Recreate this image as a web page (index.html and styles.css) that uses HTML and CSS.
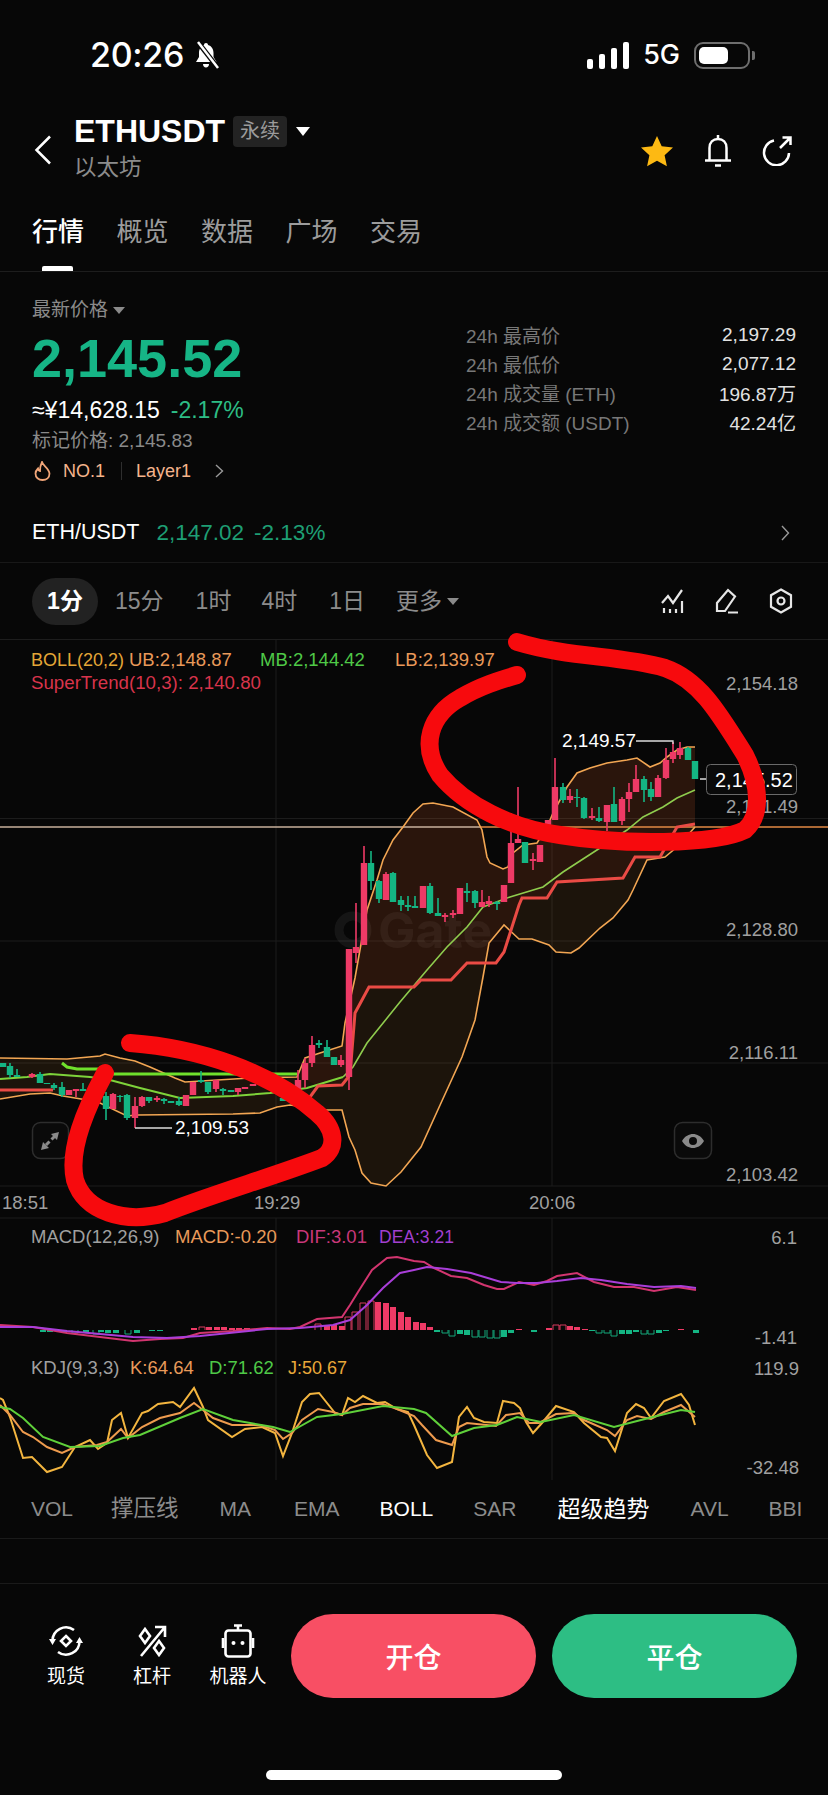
FILE: index.html
```html
<!DOCTYPE html>
<html lang="zh">
<head>
<meta charset="utf-8">
<title>ETHUSDT</title>
<link rel="stylesheet" href="styles.css">
</head>
<body>
<div class="app">
  <div class="status">
    <div class="status-left">
      <span class="time">20:26</span>
      <svg class="muted" viewBox="0 0 27 28"><path class="solid" d="M13 2c1.200 0 2 .8 2 2 3.600 1 5.500 4 5.500 8v4l3 5H3l3-5v-4c0-4 2-7 5-8 0-1.200.8-2 2-2zM10 23h6c0 2-1.300 3.500-3 3.500S10 25 10 23z"/><path class="slash-bg" d="M4 0l21 27"/><path class="slash" d="M5 1l20 26"/></svg>
    </div>
    <div class="status-right">
      <div class="signal"><i class="b1"></i><i class="b2"></i><i class="b3"></i><i class="b4"></i></div>
      <span class="net">5G</span>
      <div class="battery"><div class="battery-level"></div></div>
      <div class="battery-nub"></div>
    </div>
  </div>

  <header class="head">
    <svg class="back" viewBox="0 0 18 30"><path class="line2" d="M16 1.500L2.500 15 16 28.500"/></svg>
    <div class="title-block">
      <div class="title-row">
        <span class="symbol">ETHUSDT</span>
        <span class="badge">永续</span>
        <span class="tri-white"></span>
      </div>
      <div class="subtitle">以太坊</div>
    </div>
    <div class="head-actions">
      <svg class="ic-star" viewBox="0 0 34 32"><path class="star" d="M17 1l4.700 10.300 11.300 1.300-8.400 7.600 2.300 11.100L17 25.700 7.100 31.300l2.300-11.100L1 12.600l11.300-1.300z"/></svg>
      <svg class="ic-bell" viewBox="0 0 28 33"><path class="line2" d="M14 1v4M5.500 26V14c0-5.500 3.500-9 8.500-9s8.500 3.500 8.500 9v12M1 26.500h26M11 31.500h6"/></svg>
      <svg class="ic-share" viewBox="0 0 30 30"><path class="line2" d="M12 4.500A12.500 12.500 0 1 0 27 17M18 12L28 2M20.500 1.500H28.500V9"/></svg>
    </div>
  </header>

  <nav class="tabs">
    <a class="tab on">行情</a><a class="tab">概览</a><a class="tab">数据</a><a class="tab">广场</a><a class="tab">交易</a>
  </nav>

  <section class="summary">
    <div class="sum-left">
      <div class="latest">最新价格<span class="tri-gray"></span></div>
      <div class="price">2,145.52</div>
      <div class="fiat">≈¥14,628.15<span class="chg">-2.17%</span></div>
      <div class="mark">标记价格: 2,145.83</div>
      <div class="tags">
        <svg class="fire" viewBox="0 0 17 20"><path class="flame" d="M8 1c1 4 7 6 7.500 11.500C15.500 16.500 12.500 19 8.500 19S1.500 16.500 1.500 12.500C1.500 10.500 2.500 9 4 7.500c.3 1.500 1 2.300 2 2.500C6 7 6.500 4 8 1z"/></svg>
        <span class="tag">NO.1</span>
        <span class="tag-sep"></span>
        <span class="tag">Layer1</span>
        <svg class="tag-chev" viewBox="0 0 9 14"><path class="thin" d="M1 1l6.500 6L1 13"/></svg>
      </div>
    </div>
    <dl class="stats">
      <div class="stat"><dt>24h 最高价</dt><dd>2,197.29</dd></div>
      <div class="stat"><dt>24h 最低价</dt><dd>2,077.12</dd></div>
      <div class="stat"><dt>24h 成交量 (ETH)</dt><dd>196.87万</dd></div>
      <div class="stat"><dt>24h 成交额 (USDT)</dt><dd>42.24亿</dd></div>
    </dl>
  </section>

  <div class="spot-row">
    <span class="spot-name">ETH/USDT</span>
    <span class="spot-price">2,147.02</span>
    <span class="spot-chg">-2.13%</span>
    <svg class="spot-chev" viewBox="0 0 9 16"><path class="thin" d="M1 1l6.500 7L1 15"/></svg>
  </div>

  <div class="frames">
    <span class="frame on">1分</span>
    <span class="frame f15">15分</span>
    <span class="frame f1h">1时</span>
    <span class="frame f4h">4时</span>
    <span class="frame f1d">1日</span>
    <span class="frame fmore">更多<span class="tri-gray"></span></span>
    <div class="frame-icons">
      <svg class="fi" viewBox="0 0 24 26"><path class="line2b" d="M1 15l6-7 5 7 9-13M3 20v5M9 21v4M15 21v4M21 13v12"/></svg>
      <svg class="fi" viewBox="0 0 24 26"><path class="line2b" d="M2 23v-8L13 2l7 6.500L10 23zM13 24.500h10"/></svg>
      <svg class="fi" viewBox="0 0 24 26"><path class="line2b" d="M12 1.500l10 5.700v11.600l-10 5.700L2 18.800V7.200z"/><circle class="line2b" cx="12" cy="13" r="3.500"/></svg>
    </div>
  </div>

  <svg class="chart" viewBox="0 640 828 578" width="828" height="578">
    <path class="grid" d="M276 640V1186M552 640V1186M0 818.500H828M0 941H828M0 1063H828M0 1186H828"/>
    <circle class="wm-ring" cx="353" cy="930" r="14"/>
    <text class="wm" x="378" y="948">Gate</text>

    <polygon class="band" points="0,1058 67,1059 100,1056 105,1054 120,1058 135,1061 150,1067 175,1078 185,1082 250,1078 297,1077 305,1058 320,1053 342,1046 345,1023 355,978 367,910 377,880 383,860 393,840 403,827 413,813 423,804 433,803 453,807 477,820 482,830 487,857 490,863 503,869 508,867 513,853 523,845 537,843 547,827 553,813 560,800 567,787 577,773 590,768 607,763 627,760 637,758 650,767 660,763 667,757 677,750 687,747 695,747 695,827 677,847 665,857 647,860 633,890 628,900 613,918 600,928 579,948 571,953 556,952 549,945 532,939 519,939 504,925 489,943 483,977 475,1020 462,1057 441,1103 421,1147 401,1172 386,1186 371,1183 362,1173 355,1150 349,1137 342,1110 325,1110 290,1105 277,1107 260,1113 233,1114 137,1115 127,1116 100,1103 87,1100 63,1096 50,1093 30,1094 0,1099"/>
    <polygon class="band-red" points="300,1077 305,1058 320,1053 342,1046 345,1023 355,978 367,910 377,880 383,860 393,840 403,827 413,813 423,804 433,803 453,807 477,820 482,830 487,857 490,863 503,869 508,867 513,853 523,845 537,843 547,827 553,813 560,800 567,787 577,773 590,768 607,763 627,760 637,758 650,767 660,763 667,757 677,750 687,747 695,747 695,824 677,827 660,857 635,857 623,878 557,882 547,898 522,898 519,905 504,952 496,963 467,963 451,980 421,980 414,987 369,987 355,1013 350,1075 342,1085 318,1086"/>

    <path class="line-price-pale" d="M0 827H480"/>
    <path class="line-price" d="M480 827H828"/>

    <polyline class="boll" points="0,1058 67,1059 100,1056 105,1054 120,1058 135,1061 150,1067 175,1078 185,1082 250,1078 297,1077 305,1058 320,1053 342,1046 345,1023 355,978 367,910 377,880 383,860 393,840 403,827 413,813 423,804 433,803 453,807 477,820 482,830 487,857 490,863 503,869 508,867 513,853 523,845 537,843 547,827 553,813 560,800 567,787 577,773 590,768 607,763 627,760 637,758 650,767 660,763 667,757 677,750 687,747 695,747"/>
    <polyline class="boll" points="0,1099 30,1094 50,1093 63,1096 87,1100 100,1103 127,1116 137,1115 233,1114 260,1113 277,1107 290,1105 325,1110 342,1110 349,1137 355,1150 362,1173 371,1183 386,1186 401,1172 421,1147 441,1103 462,1057 475,1020 483,977 489,943 504,925 519,939 532,939 549,945 556,952 571,953 579,948 600,928 613,918 628,900 633,890 647,860 665,857 677,847 695,827"/>

    <polyline class="mb-strong" points="0,1079 27,1077 50,1074 90,1077 110,1080 140,1088 180,1098 233,1096 270,1093 307,1088 343,1077"/>
    <polyline class="mb" points="343,1077 353,1067 367,1043 400,1002 427,970 447,947 467,927 483,907 510,897 543,887 563,872 600,848 627,830 643,817 663,807 677,798 695,790"/>
    <polyline class="st-green" points="62,1063 67,1067 77,1069 100,1069"/>
    <polyline class="st-green" points="110,1074 297,1074"/>
    <polyline class="st-red" points="0,1090 53,1090"/>
    <polyline class="st-red" points="310,1097 318,1086 342,1085 350,1075 355,1013 369,987 414,987 421,980 451,980 467,963 496,963 504,952 519,905 522,898 547,898 557,882 623,878 635,857 660,857 677,827 695,824"/>

    <path class="wick-r" d="M32 1073V1078M76 1089V1097M113 1093V1109M135 1097V1128M142 1096V1107M157 1096V1102M216 1080V1092M238 1088V1095M298 1070V1092M305 1058V1088M312 1036V1067M341 1055V1067M349 949V1090M356 903V963M364 846V945M386 872V900M445 913V922M453 910V918M482 890V907M489 896V907M511 813V883M518 787V842M533 853V870M555 758V820M570 789V803M592 808V820M607 805V831M622 797V825M629 783V812M636 765V792M658 775V797M666 748V779M673 742V763M680 742V759"/>
    <path class="wick-g" d="M10 1063V1078M17 1069V1077M40 1072V1083M54 1083V1090M62 1082V1097M83 1083V1091M106 1092V1120M120 1095V1102M127 1094V1120M149 1097V1103M164 1098V1104M179 1097V1106M201 1071V1083M208 1082V1094M223 1088V1095M319 1040V1048M327 1040V1057M371 851V890M379 880V903M393 872V902M401 896V911M408 896V911M415 896V908M430 883V914M438 898V916M467 883V902M475 890V908M497 901V910M563 783V803M577 789V807M584 797V819M599 807V822M614 787V822M644 776V802M651 782V801M688 747V760"/>
    <path class="body-r" d="M32 1074V1077M69 1090V1095M76 1089V1091M113 1094V1109M135 1106V1118M142 1097V1106M157 1098V1100M186 1095V1106M193 1082V1095M216 1080V1089M238 1088V1092M245 1087V1089M253 1084V1086M298 1080V1090M305 1063V1080M312 1045V1063M341 1060V1065M349 949V1077M356 947V953M364 863V945M386 874V900M423 886V908M445 915V917M453 913V915M460 888V914M482 902V907M489 901V904M504 885V902M511 843V883M518 839V843M533 859V861M540 845V862M548 820V829M555 787V820M570 796V800M592 816V818M607 805V822M622 799V821M629 792V799M636 779V792M658 778V797M666 760V778M673 752V759M680 748V755"/>
    <path class="body-g" d="M3 1063V1067M10 1066V1075M17 1075V1077M40 1074V1083M47 1083V1084M54 1085V1088M62 1087V1095M83 1089V1091M106 1096V1109M120 1096V1097M127 1095V1118M149 1097V1101M164 1099V1101M171 1101V1103M179 1101V1105M201 1080V1082M208 1082V1092M223 1089V1091M231 1090V1092M283 1098V1101M319 1043V1045M327 1047V1057M334 1057V1065M371 863V881M379 881V899M393 873V902M401 900V905M408 905V907M415 906V908M430 886V913M438 913V916M467 891V893M475 891V903M497 902V904M525 842V863M563 787V800M577 797V798M584 798V818M599 818V821M614 804V822M644 779V790M651 789V797M688 748V760M695 761V779"/>

    <path class="mark-line" d="M135 1128H172M636 741H673V744M700 779H706"/>
    <text class="t-white" x="175" y="1134">2,109.53</text>
    <text class="t-white" x="562" y="747">2,149.57</text>

    <text class="t-boll" x="31" y="666">BOLL(20,2)</text>
    <text class="t-ub" x="129" y="666">UB:2,148.87</text>
    <text class="t-mb" x="260" y="666">MB:2,144.42</text>
    <text class="t-ub" x="395" y="666">LB:2,139.97</text>
    <text class="t-st" x="31" y="689">SuperTrend(10,3): 2,140.80</text>

    <text class="t-axis end" x="798" y="690">2,154.18</text>
    <text class="t-axis end" x="798" y="813">2,141.49</text>
    <text class="t-axis end" x="798" y="936">2,128.80</text>
    <text class="t-axis end" x="798" y="1059">2,116.11</text>
    <text class="t-axis end" x="798" y="1181">2,103.42</text>
    <text class="t-axis" x="2" y="1209">18:51</text>
    <text class="t-axis" x="254" y="1209">19:29</text>
    <text class="t-axis" x="529" y="1209">20:06</text>

    <rect class="pbox" x="706.500" y="764.500" width="90" height="30" rx="4"/>
    <text class="t-box" x="715" y="787">2,145.52</text>

    <rect class="float-btn" x="32.500" y="1122.500" width="36" height="36" rx="8"/>
    <path class="expand" d="M59 1132l-8 2 6 6zM41 1150l8-2-6-6z"/>
    <path class="expand-line" d="M46 1145l3.500-3.500M55 1136l-3.500 3.500"/>
    <rect class="float-btn" x="674.500" y="1122.500" width="37" height="36" rx="8"/>
    <path class="eye" d="M682 1141c3-5 7-7 11-7s8 2 11 7c-3 5-7 7-11 7s-8-2-11-7zm11-4a4 4 0 1 0 0 8 4 4 0 0 0 0-8z"/>

    <path class="marker" d="M517 642C570 658 620 655 665 668 700 680 720 715 745 755 760 785 762 815 745 830 715 845 620 845 560 835 510 828 465 805 440 775 420 745 430 715 460 698 480 686 500 680 517 675"/>
    <path class="marker" d="M130 1043C200 1048 270 1072 317 1113 335 1128 338 1148 322 1158 275 1176 210 1195 165 1213 125 1224 85 1212 75 1180 68 1150 85 1110 105 1073"/>
  </svg>

  <svg class="indicators" viewBox="0 1218 828 262" width="828" height="262">
    <path class="grid" d="M276 1218V1480M552 1218V1480M0 1218H828"/>
    <text class="t-axis" x="31" y="1243">MACD(12,26,9)</text>
    <text class="t-ub" x="175" y="1243">MACD:-0.20</text>
    <text class="t-dif" x="296" y="1243">DIF:3.01</text>
    <text class="t-dea" x="379" y="1243">DEA:3.21</text>
    <text class="t-axis end" x="797" y="1244">6.1</text>
    <text class="t-axis end" x="797" y="1344">-1.41</text>
    <text class="t-axis end" x="799" y="1375">119.9</text>
    <text class="t-axis end" x="799" y="1474">-32.48</text>
    <text class="t-axis" x="31" y="1374">KDJ(9,3,3)</text>
    <text class="t-ub" x="130" y="1374">K:64.64</text>
    <text class="t-mb" x="209" y="1374">D:71.62</text>
    <text class="t-j" x="288" y="1374">J:50.67</text>

    <path class="h-gf" d="M43 1330V1332M50 1330V1332M64 1330V1332M86 1330V1333M101 1330V1332M108 1330V1333M116 1330V1333M137 1330V1333M152 1330V1331M160 1330V1331M437 1330V1332M460 1330V1334M467 1330V1335M504 1330V1337M511 1330V1333M534 1330V1332M592 1330V1331M622 1330V1334M629 1330V1334M636 1330V1332M659 1330V1333M666 1330V1331M696 1330V1333"/>
    <path class="h-go" d="M72 1330V1333H78V1330M93 1330V1334H99V1330M125 1330V1334H131V1330M442 1330V1333H448V1330M449 1330V1336H455V1330M472 1330V1337H478V1330M479 1330V1337H485V1330M487 1330V1338H493V1330M494 1330V1338H500V1330M596 1330V1333H602V1330M604 1330V1333H610V1330M611 1330V1336H617V1330M641 1330V1334H647V1330M648 1330V1334H654V1330"/>
    <path class="h-rf" d="M194 1330V1328M209 1330V1327M217 1330V1327M224 1330V1327M232 1330V1328M239 1330V1328M247 1330V1328M334 1330V1325M327 1330V1325M342 1330V1326M378 1330V1302M386 1330V1303M393 1330V1307M401 1330V1312M408 1330V1317M416 1330V1322M423 1330V1323M430 1330V1327M519 1330V1329M549 1330V1328M570 1330V1326M577 1330V1327M585 1330V1329M681 1330V1329"/>
    <path class="h-ro" d="M199 1330V1327H205V1330M315 1330V1324H321V1330M345 1330V1317H351V1330M352 1330V1312H358V1330M360 1330V1303H366V1330M368 1330V1301H374V1330M553 1330V1325H559V1330M560 1330V1325H566V1330"/>

    <polyline class="dif" points="0,1325 33,1327 67,1333 100,1337 133,1341 160,1339 183,1338 200,1333 233,1331 267,1328 290,1329 300,1327 317,1319 342,1317 350,1305 358,1292 372,1270 387,1258 397,1257 414,1261 424,1262 434,1268 451,1276 467,1278 484,1285 497,1289 504,1289 519,1282 534,1285 547,1281 557,1276 577,1273 594,1282 614,1287 634,1287 654,1291 677,1287 696,1290"/>
    <polyline class="dea" points="0,1327 33,1327 67,1331 100,1334 133,1337 167,1338 200,1336 267,1329 300,1328 333,1325 350,1320 367,1305 383,1288 400,1273 414,1270 427,1267 447,1269 471,1273 501,1282 517,1283 537,1283 557,1281 581,1278 601,1280 627,1284 654,1287 681,1286 696,1288"/>

    <polyline class="kj" points="0,1398 3,1400 10,1417 23,1458 32,1457 47,1472 62,1467 75,1447 90,1440 98,1449 107,1443 112,1420 121,1413 128,1438 142,1413 148,1411 158,1404 173,1402 180,1407 194,1388 203,1407 208,1420 232,1437 245,1429 262,1427 275,1433 283,1456 292,1433 302,1402 310,1394 319,1393 335,1413 342,1415 348,1398 355,1402 363,1396 377,1403 385,1402 397,1409 408,1412 414,1425 427,1455 437,1468 452,1462 459,1417 467,1407 474,1418 484,1422 497,1423 503,1401 514,1403 520,1408 526,1422 533,1433 542,1423 556,1406 574,1412 584,1423 601,1437 607,1438 615,1451 627,1413 636,1404 644,1408 651,1418 664,1401 681,1394 689,1405 695,1425"/>
    <polyline class="kk" points="0,1405 10,1415 23,1432 33,1437 47,1447 62,1453 75,1447 97,1445 107,1442 121,1429 128,1438 142,1427 160,1418 180,1413 194,1403 203,1410 213,1418 232,1425 260,1425 275,1430 283,1439 292,1433 302,1420 318,1409 333,1412 342,1415 350,1408 363,1404 383,1404 397,1409 414,1416 422,1425 436,1440 452,1445 459,1427 467,1423 496,1426 506,1415 520,1413 529,1423 539,1423 556,1414 574,1413 584,1420 607,1430 615,1436 627,1420 637,1416 651,1419 664,1412 681,1405 695,1417"/>
    <polyline class="kd" points="0,1407 10,1409 23,1418 43,1437 70,1447 100,1446 123,1438 140,1435 180,1418 203,1409 233,1420 273,1427 290,1432 317,1417 342,1414 383,1406 414,1409 426,1413 452,1436 474,1428 497,1425 517,1417 541,1422 574,1415 614,1427 641,1420 681,1410 695,1412"/>
  </svg>

  <div class="ind-tabs">
    <span class="it i-vol">VOL</span>
    <span class="it cjk i-sup">撑压线</span>
    <span class="it i-ma">MA</span>
    <span class="it i-ema">EMA</span>
    <span class="it on i-boll">BOLL</span>
    <span class="it i-sar">SAR</span>
    <span class="it on cjk i-st">超级趋势</span>
    <span class="it i-avl">AVL</span>
    <span class="it i-bbi">BBI</span>
  </div>
  <div class="spacer"></div>

  <footer class="actions">
    <div class="tool t-spot">
      <svg class="tool-ic" viewBox="0 0 34 34"><path class="line3" d="M3.500 17A13.500 13.500 0 0 1 25 6M30.500 17A13.500 13.500 0 0 1 9 28"/><path class="solid" d="M0 15h7l-3.500 6zM27 19h7l-3.500-6z"/><path class="line3" d="M17 12l5 5-5 5-5-5z"/></svg>
      <span class="tool-name">现货</span>
    </div>
    <div class="tool t-lev">
      <svg class="tool-ic" viewBox="0 0 34 34"><path class="line3" d="M10 5l5 7-5 7-5-7zM24 17l5 7-5 7-5-7zM6 32L30 3M20 3h10v10"/></svg>
      <span class="tool-name">杠杆</span>
    </div>
    <div class="tool t-bot">
      <svg class="tool-ic" viewBox="0 0 34 34"><rect class="line3" x="4.500" y="6.500" width="25" height="26" rx="3"/><path class="line3" d="M13 1.500h8M17 1.500v5M2 14v10M32 14v10"/><circle class="solid" cx="12.500" cy="19" r="2"/><circle class="solid" cx="21.500" cy="19" r="2"/></svg>
      <span class="tool-name">机器人</span>
    </div>
    <button class="cta open">开仓</button>
    <button class="cta close">平仓</button>
  </footer>
  <div class="home-wrap"><div class="home"></div></div>
</div>
</body>
</html>
```

FILE: styles.css
```css
* { box-sizing: border-box; }
html, body { margin: 0; padding: 0; background: #070707; }
body {
  font-family: "Liberation Sans", "Noto Sans CJK SC", sans-serif;
  color: #fff;
}
.app { width: 828px; height: 1795px; overflow: hidden; background: #070707; }

/* status bar */
.status { height: 100px; display: flex; justify-content: space-between; align-items: flex-start; padding: 39px 73px 0 90px; }
.status-left, .status-right { display: flex; align-items: center; height: 32px; }
.time { font-family: Inter, sans-serif; font-size: 34px; font-weight: 500; line-height: 32px; letter-spacing: -.3px; }
.muted { width: 27px; height: 28px; margin-left: 9px; }
.solid { fill: #fff; }
.slash-bg { stroke: #070707; stroke-width: 5; fill: none; }
.slash { stroke: #fff; stroke-width: 2.500; fill: none; }
.signal { display: flex; align-items: flex-end; gap: 6px; height: 27px; }
.signal i { display: block; width: 6px; background: #fff; border-radius: 2px; }
.b1 { height: 10px; } .b2 { height: 15px; } .b3 { height: 21px; } .b4 { height: 27px; }
.net { font-family: Inter, sans-serif; font-size: 27px; font-weight: 500; margin-left: 14px; line-height: 32px; }
.battery { width: 56px; height: 27px; border: 2px solid #6e6e6e; border-radius: 9px; padding: 3px; margin-left: 14px; }
.battery-level { width: 29px; height: 17px; background: #fff; border-radius: 5px; }
.battery-nub { width: 3px; height: 9px; background: #6e6e6e; border-radius: 0 2px 2px 0; margin-left: 2px; }

/* header */
.head { height: 105px; display: flex; padding: 16px 36px 0 34px; align-items: flex-start; }
.back { width: 18px; height: 30px; margin-top: 19px; }
.line2, .line2b, .line3, .thin { fill: none; stroke: #fff; }
.line2 { stroke-width: 2.500; }
.line2b { stroke-width: 2.200; stroke: #e6e6e6; }
.line3 { stroke-width: 2.600; }
.title-block { margin-left: 22px; }
.title-row { display: flex; align-items: center; height: 31px; }
.symbol { font-size: 32px; font-weight: 700; line-height: 31px; width: 159px; }
.badge { width: 54px; height: 31px; border-radius: 4px; background: #232323; color: #9b9b9b; font-size: 20px; line-height: 31px; text-align: center; }
.tri-white { width: 0; height: 0; margin-left: 9px; border-left: 7px solid transparent; border-right: 7px solid transparent; border-top: 9px solid #fff; }
.subtitle { font-size: 22.500px; color: #8c8c8c; line-height: 30px; margin-top: 6px; }
.head-actions { margin-left: auto; display: flex; align-items: center; margin-top: 18px; gap: 30px; }
.ic-star { width: 34px; height: 32px; }
.star { fill: #fdb913; }
.ic-bell { width: 28px; height: 33px; }
.ic-share { width: 30px; height: 30px; }

/* tabs */
.tabs { height: 67px; display: flex; gap: 32.500px; padding-left: 32px; border-bottom: 1px solid #1d1d1d; }
.tab { font-size: 26px; line-height: 36px; margin-top: 9px; color: #9c9c9c; position: relative; }
.tab.on { color: #fff; font-weight: 500; }
.tab.on::after { content: ""; position: absolute; left: 10px; right: 11px; top: 52px; height: 5px; background: #fff; border-radius: 2px 2px 0 0; }

/* summary */
.summary { display: flex; height: 237px; padding: 0 32px; justify-content: space-between; }
.latest { font-size: 19px; color: #8a8a8a; line-height: 24px; margin-top: 26px; display: flex; align-items: center; }
.tri-gray { display: inline-block; width: 0; height: 0; margin-left: 5px; border-left: 6px solid transparent; border-right: 6px solid transparent; border-top: 7px solid #8a8a8a; }
.price { font-size: 54px; font-weight: 700; color: #16b586; line-height: 60px; margin-top: 6px; }
.fiat { font-size: 23px; line-height: 28px; margin-top: 8px; }
.chg { color: #2dbd85; margin-left: 11px; }
.mark { font-size: 19px; color: #8a8a8a; line-height: 26px; margin-top: 4px; }
.tags { display: flex; align-items: center; height: 24px; margin-top: 5px; color: #f5b48c; }
.fire { width: 17px; height: 20px; margin-left: 2px; }
.flame { fill: none; stroke: #f0a578; stroke-width: 1.800; }
.tag { font-size: 18px; line-height: 24px; }
.tag:first-of-type { margin-left: 12px; }
.tag-sep { width: 1px; height: 18px; background: #2e2e2e; margin: 0 14px 0 16px; }
.tag-chev { width: 9px; height: 14px; margin-left: 24px; }
.thin { stroke: #999; stroke-width: 1.400; }
.stats { margin: 48px 0 0; width: 330px; }
.stat { display: flex; justify-content: space-between; height: 29px; align-items: center; }
.stat dt { font-size: 19px; color: #787878; }
.stat dd { margin: 0; font-size: 19px; color: #e2e2e2; }

.spot-row { height: 54px; display: flex; align-items: center; padding: 0 38px 6px 32px; border-bottom: 1px solid #181818; font-size: 22px; }
.spot-name { font-size: 21.500px; }
.spot-price { color: #1e9e74; margin-left: 17px; font-size: 22.500px; }
.spot-chg { color: #1e9e74; margin-left: 10px; font-size: 22.500px; }
.spot-chev { width: 9px; height: 16px; margin-left: auto; }

/* time frames */
.frames { height: 77px; position: relative; display: flex; align-items: center; padding-left: 32px; border-bottom: 1px solid #1d1d1d; font-size: 23px; color: #8c8c8c; }
.frame { line-height: 30px; }
.frame.on { width: 66px; height: 47px; line-height: 47px; border-radius: 24px; background: #222; color: #fff; font-weight: 700; text-align: center; }
.f15 { margin-left: 17px; }
.f1h { margin-left: 32px; }
.f4h { margin-left: 30px; }
.f1d { margin-left: 32px; }
.fmore { margin-left: 31px; display: flex; align-items: center; }
.frame-icons { margin-left: auto; display: flex; gap: 30px; padding-right: 35px; }
.fi { width: 24px; height: 26px; }

/* chart */
.chart, .indicators { display: block; overflow: visible; }
.chart { position: relative; z-index: 2; }
.grid { stroke: #1c1c1c; stroke-width: 1; fill: none; }
.band { fill: rgba(240, 150, 50, .09); }
.band-red { fill: rgba(230, 40, 30, .07); }
.boll { fill: none; stroke: #f2a653; stroke-width: 1.600; }
.mb { fill: none; stroke: #8fcc4e; stroke-width: 1.600; }
.mb-strong { fill: none; stroke: #7ed33a; stroke-width: 2; }
.st-green { fill: none; stroke: #6fe02c; stroke-width: 3; }
.st-red { fill: none; stroke: #ea4b45; stroke-width: 3; }
.line-price-pale { stroke: #c8b09c; stroke-width: 1.500; }
.line-price { stroke: #e38a45; stroke-width: 1.500; }
.wick-r { stroke: #ee3a66; stroke-width: 1.600; fill: none; }
.wick-g { stroke: #14b583; stroke-width: 1.600; fill: none; }
.body-r { stroke: #ee3a66; stroke-width: 6.400; fill: none; }
.body-g { stroke: #14b583; stroke-width: 6.400; fill: none; }
.wm { font-family: Inter, sans-serif; font-size: 50px; font-weight: 700; fill: rgba(255,255,255,.055); }
.wm-ring { fill: none; stroke: rgba(255,255,255,.06); stroke-width: 9; }
.mark-line { stroke: #ddd; stroke-width: 1.300; fill: none; }
text { font-family: "Liberation Sans", Arial, sans-serif; font-size: 18.500px; }
.end { text-anchor: end; }
.t-white { fill: #fff; font-size: 19px; }
.t-boll { fill: #e4a637; font-size: 18px; }
.t-ub { fill: #e99a5a; }
.t-mb { fill: #4fc947; }
.t-st { fill: #d8344b; font-size: 18.700px; }
.t-axis { fill: #a0a0a0; }
.t-box { fill: #fff; font-size: 20px; }
.t-dif { fill: #c9377a; }
.t-dea { fill: #a23fd0; font-size: 17.500px; }
.t-j { fill: #e8a83a; font-size: 18px; }
.pbox { fill: #0a0a0a; stroke: #6a6a6a; stroke-width: 1; }
.float-btn { fill: #0a0a0a; stroke: #2d2d2d; stroke-width: 1.500; }
.expand { fill: #8a8a8a; }
.expand-line { stroke: #8a8a8a; stroke-width: 3; fill: none; }
.eye { fill: #8a8a8a; fill-rule: evenodd; }
.marker { fill: none; stroke: #f70a0d; stroke-width: 18; stroke-linecap: round; stroke-linejoin: round; }

/* macd / kdj */
.dif { fill: none; stroke: #d2356f; stroke-width: 2; }
.dea { fill: none; stroke: #a93ed9; stroke-width: 2; }
.kj { fill: none; stroke: #f3b53f; stroke-width: 2; }
.kk { fill: none; stroke: #ee9b4e; stroke-width: 2; }
.kd { fill: none; stroke: #5fd03a; stroke-width: 2; }
.h-gf { stroke: #14b583; stroke-width: 6; fill: none; }
.h-go { stroke: #14a87b; stroke-width: 1; fill: none; }
.h-rf { stroke: #ee3a66; stroke-width: 6; fill: none; }
.h-ro { stroke: #d93a5e; stroke-width: 1; fill: none; }

/* indicator tabs */
.ind-tabs { height: 59px; position: relative; border-bottom: 1px solid #1a1a1a; display: flex; align-items: center; font-size: 21px; color: #8c8c8c; padding: 0 0 0 31px; }
.it { line-height: 30px; }
.it.on { color: #fff; }
.it.cjk { font-size: 22.500px; }
.i-st.cjk { font-size: 23px; }
.i-sup { margin-left: 38px; }
.i-ma { margin-left: 41px; }
.i-ema { margin-left: 43px; }
.i-boll { margin-left: 40px; }
.i-sar { margin-left: 40px; }
.i-st { margin-left: 41px; }
.i-avl { margin-left: 41px; }
.i-bbi { margin-left: 40px; }
.spacer { height: 45px; border-bottom: 1px solid #1a1a1a; }

/* bottom actions */
.actions { height: 155px; display: flex; align-items: flex-start; padding-top: 30px; position: relative; }
.tool { width: 86px; display: flex; flex-direction: column; align-items: center; margin-top: 10px; }
.t-spot { margin-left: 23px; }
.tool-ic { width: 34px; height: 34px; }
.tool-name { font-size: 19px; line-height: 24px; margin-top: 7px; white-space: nowrap; }
.cta { width: 245px; height: 84px; border: 0; border-radius: 42px; color: #fff; font-family: inherit; font-size: 28px; font-weight: 500; }
.open { background: #f84f64; margin-left: 10px; }
.close { background: #2dbe84; margin-left: 16px; }
.home-wrap { display: flex; justify-content: center; padding-top: 31px; }
.home { width: 296px; height: 10px; background: #fff; border-radius: 5px; }
```
